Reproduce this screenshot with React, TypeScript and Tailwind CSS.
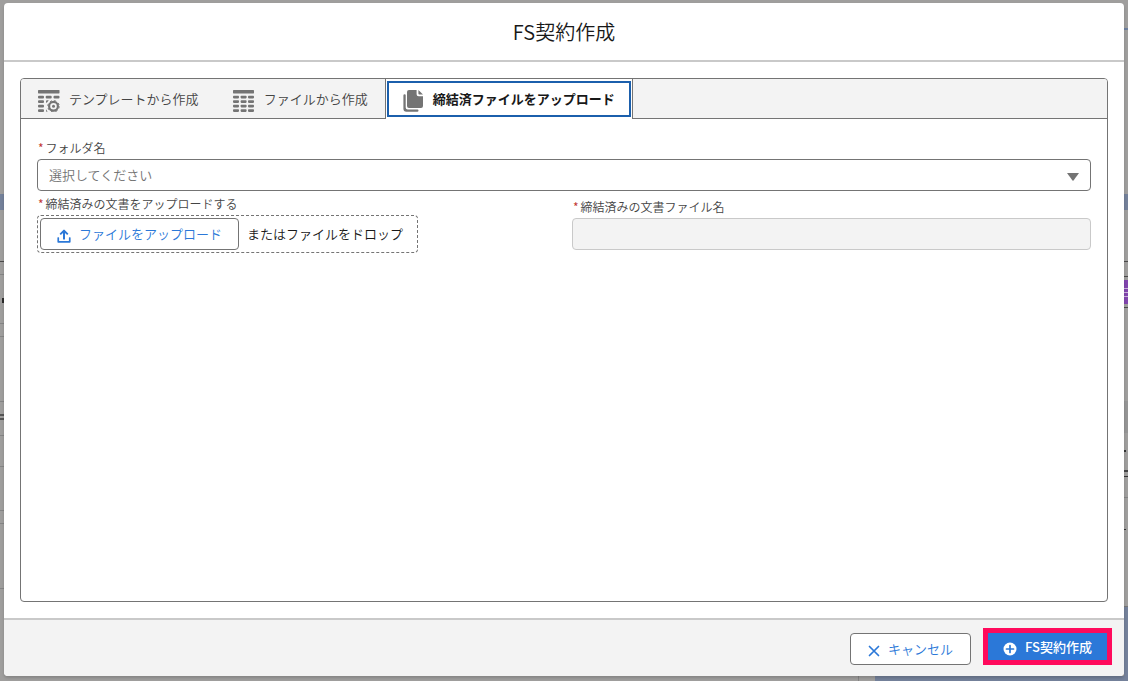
import type { ReactNode } from 'react';
import clsx from 'clsx';

type TabId = 'template' | 'file' | 'upload';

const LEFT_ROWS = [
  'h-[194px]',
  'h-4 bg-[#74819a]',
  'h-[51px]',
  'h-px bg-[#4b4b4b]',
  'h-3',
  'h-px bg-[#858585]',
  'h-[23px]',
  'h-[5px] w-[2px] self-end bg-[#2b2b2b]',
  'h-5',
  'h-px bg-[#858585]',
  'h-3',
  'h-px bg-[#858585]',
  'h-16',
  'h-px bg-[#858585]',
  'h-3',
  'h-[2px] bg-[#555555]',
  'h-[2px]',
  'h-[2px] bg-[#555555]',
  'h-[15px]',
  'h-px bg-[#858585]',
  'h-[30px]',
  'h-px bg-[#858585]',
  'h-[43px]',
  'h-px bg-[#858585]',
  'h-3',
  'h-px bg-[#858585]',
  'h-16',
  'h-px bg-[#858585]',
];

const RIGHT_ROWS = [
  'h-[28px]',
  'h-[2px] bg-[#6d7f9e]',
  'h-[164px]',
  'h-4 bg-[#74819a]',
  'h-[51px]',
  'h-px bg-[#4b4b4b]',
  'h-[14px]',
  'h-px bg-[#4b4b4b]',
  'h-[3px]',
  'h-2 bg-[#8145ad]',
  'h-px bg-[#c9b3d9]',
  'h-[3px] bg-[#8145ad]',
  'h-px bg-[#c9b3d9]',
  'h-[3px] bg-[#8145ad]',
  'h-px bg-[#c9b3d9]',
  'h-[7px] bg-[#8145ad]',
  'h-[3px]',
  'h-px bg-[#4b4b4b]',
  'h-[93px]',
  'h-8 bg-[#959595]',
  'h-[17px]',
  'h-[2px] w-[2px] bg-[#333333]',
  'h-[18px]',
  'h-[2px] bg-[#444444]',
  'h-1',
  'h-px bg-[#333333]',
  'h-5',
  'h-px bg-[#858585]',
  'h-[31px]',
  'h-px w-[2px] bg-[#333333]',
  'h-[76px]',
  'h-px bg-[#777777]',
  'grow bg-[#74819a]',
];

const Backdrop = () => (
  <div className="absolute inset-0 flex flex-col bg-[#9f9e9d]" aria-hidden="true">
    <div className="flex min-h-0 grow justify-between">
      <div className="flex w-1 flex-col overflow-hidden">
        {LEFT_ROWS.map((row, index) => (
          <div key={index} className={clsx('shrink-0', row)} />
        ))}
      </div>
      <div className="flex w-1 flex-col overflow-hidden">
        {RIGHT_ROWS.map((row, index) => (
          <div key={index} className={clsx('shrink-0', row)} />
        ))}
      </div>
    </div>
    <div className="flex h-[5px] shrink-0 justify-end">
      <div className="w-[17px] border-l border-[#858585]" />
      <div className="w-[253px] bg-[#74819a]" />
    </div>
  </div>
);

const TemplateIcon = () => (
  <svg width="22" height="22" viewBox="0 0 22 22" fill="#747474" aria-hidden="true">
    <rect x="0" y="0" width="21.5" height="3.4" rx=".6" />
    <rect x="0" y="5.8" width="6" height="2.6" rx="1" />
    <rect x="7.7" y="5.8" width="6" height="2.6" rx="1" />
    <rect x="15.5" y="5.8" width="6" height="2.6" rx="1" />
    <rect x="0" y="10.3" width="6" height="2.6" rx="1" />
    <rect x="0" y="14.8" width="6" height="2.6" rx="1" />
    <rect x="0" y="19.3" width="6" height="2.6" rx="1" />
    <path d="M8 11.3a1 1 0 0 1 1-1h1.8l-2 2.4h-.4a.6.6 0 0 1-.4-.6zM8 19.3l1.6 2.4H8.6a.6.6 0 0 1-.6-.6z" />
    <circle cx="15.5" cy="16.3" r="4.4" fill="none" stroke="#747474" strokeWidth="2.2" />
    <circle cx="15.5" cy="16.3" r="5.7" fill="none" stroke="#747474" strokeWidth="1" strokeDasharray="2.2 2.28" />
    <circle cx="15.5" cy="16.3" r="1.5" />
  </svg>
);

const TableIcon = () => (
  <svg width="22" height="22" viewBox="0 0 22 22" fill="#747474" aria-hidden="true">
    <rect x="0" y="0" width="21" height="3.4" rx=".6" />
    {[5.8, 10.3, 14.8, 19.3].map((y) => (
      <g key={y}>
        <rect x="0" y={y} width="6" height="2.6" rx=".8" />
        <rect x="7.6" y={y} width="6" height="2.6" rx=".8" />
        <rect x="15" y={y} width="6" height="2.6" rx=".8" />
      </g>
    ))}
  </svg>
);

const FilesIcon = () => (
  <svg width="22" height="22" viewBox="0 0 22 22" fill="#747474" aria-hidden="true">
    <path d="M6 0h7.6v4.2a2 2 0 0 0 2 2H20v9.8a2 2 0 0 1-2 2H6a2 2 0 0 1-2-2V2a2 2 0 0 1 2-2z" />
    <path d="M15.4 0 20 4.6h-3.8a.8.8 0 0 1-.8-.8z" />
    <path d="M1.7 4.2a1 1 0 0 1 1 1v12.3a2 2 0 0 0 2 2h9.8a1 1 0 0 1 1 1 1.2 1.2 0 0 1-1.2 1.2H3.4A3 3 0 0 1 .4 18.7V5.5a1.3 1.3 0 0 1 1.3-1.3z" />
  </svg>
);

const UploadIcon = () => (
  <svg width="14" height="14" viewBox="0 0 14 14" fill="#2b78d8" aria-hidden="true">
    <path d="M6.3.9a1 1 0 0 1 1.4 0l3.5 3.5a.5.5 0 0 1 0 .7l-.6.6a.5.5 0 0 1-.7 0L8 3.9v6a.5.5 0 0 1-.5.5h-1a.5.5 0 0 1-.5-.5v-6L4.1 5.7a.5.5 0 0 1-.7 0l-.6-.6a.5.5 0 0 1 0-.7z" />
    <path d="M.9 8.3h.7c.3 0 .5.2.5.5v3.1h9.8V8.8c0-.3.2-.5.5-.5h.7c.3 0 .5.2.5.5v3.9c0 .6-.5 1-1 1H1.4c-.6 0-1-.4-1-1V8.8c0-.3.2-.5.5-.5z" />
  </svg>
);

const CloseIcon = () => (
  <svg width="12" height="12" viewBox="0 0 12 12" stroke="#2b78d8" strokeWidth="1.7" strokeLinecap="round" aria-hidden="true">
    <path d="M1.5 1.5l9 9M10.5 1.5l-9 9" />
  </svg>
);

const AddIcon = () => (
  <svg width="14" height="14" viewBox="0 0 14 14" aria-hidden="true">
    <circle cx="7" cy="7" r="6.5" fill="#fff" />
    <path d="M7 3.5v7M3.5 7h7" stroke="#2b78d8" strokeWidth="1.7" strokeLinecap="round" />
  </svg>
);

const TABS: { id: TabId; label: string; icon: ReactNode }[] = [
  { id: 'template', label: 'テンプレートから作成', icon: <TemplateIcon /> },
  { id: 'file', label: 'ファイルから作成', icon: <TableIcon /> },
  { id: 'upload', label: '締結済ファイルをアップロード', icon: <FilesIcon /> },
];

const ACTIVE_TAB: TabId = 'upload';

const TabBar = () => (
  <div role="tablist" className="flex h-10 rounded-t-[3px] bg-[#f3f3f3]">
    {TABS.map(({ id, label, icon }) => {
      const active = id === ACTIVE_TAB;

      return (
        <div
          key={id}
          className={clsx('flex border-[#747474]', active ? 'border-x bg-white p-px pt-[2px]' : 'border-b')}
        >
          <button
            type="button"
            role="tab"
            aria-selected={active}
            className={clsx(
              'flex items-center text-[13px] leading-5',
              active
                ? 'mb-px gap-2 border-2 border-[#1b5fac] px-[14px] font-bold text-[#181818]'
                : 'gap-[9px] px-[17px] text-[#444444]',
            )}
          >
            <span className="pt-1">{icon}</span>
            {label}
          </button>
        </div>
      );
    })}
    <div className="grow border-b border-[#747474]" />
  </div>
);

const FieldLabel = ({ htmlFor, children }: { htmlFor: string; children: ReactNode }) => (
  <label htmlFor={htmlFor} className="block pb-[2px] pl-px text-[12px] leading-[18px] text-[#444444]">
    <abbr title="必須" className="mr-[2px] font-normal text-[#c23934] no-underline">
      *
    </abbr>
    {children}
  </label>
);

const UploadPanel = () => (
  <div role="tabpanel" className="px-4 pt-5">
    <FieldLabel htmlFor="folder">フォルダ名</FieldLabel>
    <div className="relative">
      <select
        id="folder"
        defaultValue=""
        className="block h-8 w-full appearance-none rounded border border-[#747474] bg-white px-[11px] text-[13px] text-[#747474]"
      >
        <option value="">選択してください</option>
      </select>
      <svg className="absolute right-3 top-[14px]" width="12" height="8" viewBox="0 0 12 8" fill="#747474" aria-hidden="true">
        <path d="M0 0h12L6.5 7.5a.7.7 0 0 1-1 0z" />
      </svg>
    </div>
    <div className="grid grid-cols-2 gap-4">
      <div className="pt-1">
        <FieldLabel htmlFor="document">締結済みの文書をアップロードする</FieldLabel>
        <div className="flex w-fit items-center gap-2 rounded border border-dashed border-[#747474] py-[2px] pl-[2px] pr-[14px]">
          <button
            id="document"
            type="button"
            className="flex h-8 items-center gap-2 rounded border border-[#747474] px-4 text-[13px] text-[#2b78d8]"
          >
            <span className="pt-1">
              <UploadIcon />
            </span>
            ファイルをアップロード
          </button>
          <span className="text-[13px] text-[#181818]">またはファイルをドロップ</span>
        </div>
      </div>
      <div className="pt-[7px]">
        <FieldLabel htmlFor="file-name">締結済みの文書ファイル名</FieldLabel>
        <input
          id="file-name"
          type="text"
          disabled
          className="block h-8 w-full rounded border border-[#c9c9c9] bg-[#f3f3f3] px-3 text-[13px]"
        />
      </div>
    </div>
  </div>
);

const App = () => {
  return (
    <div className="relative flex h-screen flex-col px-1 pb-[5px] pt-[3px] font-['Noto_Sans_CJK_JP',sans-serif] font-[350]">
      <Backdrop />
      <section
        role="dialog"
        aria-labelledby="dialog-title"
        className="relative flex min-h-0 grow flex-col rounded bg-white shadow-[0_2px_3px_rgba(0,0,0,0.16)]"
      >
        <header className="border-b-2 border-[#c9c9c9] py-[14px] text-center">
          <h1 id="dialog-title" className="text-[20px] font-[350] leading-[29px] text-[#181818]">
            FS契約作成
          </h1>
        </header>
        <main className="flex grow flex-col p-4">
          <div className="grow rounded border border-[#747474]">
            <TabBar />
            <UploadPanel />
          </div>
        </main>
        <footer className="flex items-end justify-end gap-3 rounded-b border-t-2 border-[#c9c9c9] bg-[#f3f3f3] px-3 pb-[11px] pt-2">
          <button
            type="button"
            className="flex h-8 items-center gap-2 rounded border border-[#747474] bg-white px-[17px] text-[13px] text-[#2b78d8]"
          >
            <span className="pt-1">
              <CloseIcon />
            </span>
            キャンセル
          </button>
          <button
            type="button"
            className="flex h-[37px] items-center gap-2 border-[5px] border-[#ff0a5c] bg-[#2b78d8] px-[15px] text-[13px] font-medium text-white"
          >
            <span className="pt-1">
              <AddIcon />
            </span>
            FS契約作成
          </button>
        </footer>
      </section>
    </div>
  );
};

export default App;
